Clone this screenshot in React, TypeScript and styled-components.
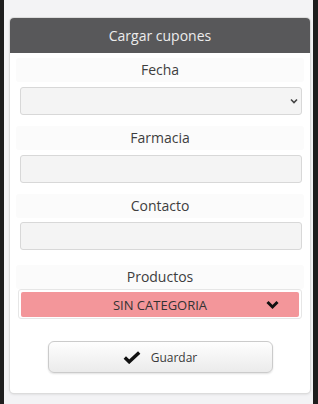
import React from 'react';
import styled, { createGlobalStyle } from 'styled-components';

const GlobalStyle = createGlobalStyle`
  html, body {
    margin: 0;
    padding: 0;
    background: #1e1e1e;
  }
  body {
    font-family: 'Open Sans', 'Liberation Sans', sans-serif;
  }
  * {
    box-sizing: border-box;
  }
`;

const Screen = styled.div`
  width: 318px;
  height: 404px;
  padding: 0 5px 0 4px;
  background: #1e1e1e;
  overflow: hidden;
`;

const Page = styled.div`
  height: 100%;
  background: #f3f3f5;
  padding: 18px 3px 0 6px;
`;

const Card = styled.div`
  width: 300px;
  background: #fff;
  border-radius: 4px;
  box-shadow: 0 0 0 1px #dcdcdc, 0 1px 3px rgba(0, 0, 0, 0.15);
`;

const Header = styled.div`
  height: 35px;
  background: #58585a;
  border-radius: 4px 4px 0 0;
  color: #ececec;
  font-size: 14px;
  display: flex;
  align-items: center;
  justify-content: center;
`;

const Body = styled.div`
  padding: 5px 6px 20px;
  display: flex;
  flex-direction: column;
`;

const Field = styled.div<{ $top?: number }>`
  margin-top: ${(p) => p.$top ?? 0}px;
  display: flex;
  flex-direction: column;
`;

const Label = styled.div<{ $gap?: number }>`
  height: 24px;
  line-height: 24px;
  background: #fbfbfb;
  border-radius: 3px;
  text-align: center;
  font-size: 14px;
  color: #3e3e3e;
  margin-bottom: ${(p) => p.$gap ?? 5}px;
`;

const Control = styled.div`
  position: relative;
  margin: 0 2px 0 4px;
`;

const Input = styled.input`
  display: block;
  width: 100%;
  height: 28px;
  background: #f4f4f4;
  border: 1px solid #d8d8d8;
  border-radius: 3px;
  font-family: inherit;
  font-size: 13px;
  outline: none;
`;

const Select = styled.select`
  display: block;
  width: 100%;
  height: 28px;
  background: #f4f4f4;
  border: 1px solid #d8d8d8;
  border-radius: 3px;
  appearance: none;
  font-family: inherit;
  font-size: 13px;
  outline: none;
`;

const Arrow = styled.svg<{ $right: number }>`
  position: absolute;
  right: ${(p) => p.$right}px;
  top: 50%;
  transform: translateY(-50%);
  pointer-events: none;
`;

const PinkFrame = styled.div`
  margin: 0 2px 0 2px;
  padding: 2px 2px 1px;
  border: 1px solid #e6e6e6;
  border-radius: 3px;
`;

const PinkSelect = styled.div`
  position: relative;
  height: 25px;
  background: #f3969a;
  border-radius: 2px;
  display: flex;
  align-items: center;
  justify-content: center;
  font-size: 13px;
  color: #333;
`;

const Actions = styled.div`
  display: flex;
  justify-content: center;
  margin-top: 22px;
`;

const Button = styled.button`
  width: 225px;
  height: 32px;
  display: flex;
  align-items: center;
  justify-content: center;
  gap: 10px;
  border: 1px solid #cbcbcb;
  border-radius: 6px;
  background: linear-gradient(#fefefe, #ebebeb);
  box-shadow: 0 1px 2px rgba(0, 0, 0, 0.12);
  font-family: inherit;
  font-size: 12px;
  color: #3a3a3a;
  padding: 0;
`;

function SmallChevron() {
  return (
    <Arrow $right={4} width="8" height="6" viewBox="0 0 8 6">
      <polyline points="1,1.5 4,4.5 7,1.5" fill="none" stroke="#444" strokeWidth="1.6" />
    </Arrow>
  );
}

function BoldChevron() {
  return (
    <Arrow $right={20} width="13" height="9" viewBox="0 0 13 9">
      <polyline points="1.5,1.5 6.5,6.5 11.5,1.5" fill="none" stroke="#111" strokeWidth="3" />
    </Arrow>
  );
}

function CheckIcon() {
  return (
    <svg width="18" height="13" viewBox="0 0 18 13">
      <polyline points="1.8,6.5 6.2,10.8 16.2,1.6" fill="none" stroke="#111" strokeWidth="3.4" />
    </svg>
  );
}

export default function App() {
  return (
    <Screen>
      <GlobalStyle />
      <Page>
        <Card>
          <Header>Cargar cupones</Header>
          <Body>
            <Field>
              <Label>Fecha</Label>
              <Control>
                <Select defaultValue="">
                  <option value=""></option>
                </Select>
                <SmallChevron />
              </Control>
            </Field>
            <Field $top={11}>
              <Label>Farmacia</Label>
              <Control>
                <Input />
              </Control>
            </Field>
            <Field $top={11}>
              <Label $gap={4}>Contacto</Label>
              <Control>
                <Input />
              </Control>
            </Field>
            <Field $top={15}>
              <Label $gap={0}>Productos</Label>
              <PinkFrame>
                <PinkSelect>
                  SIN CATEGORIA
                  <BoldChevron />
                </PinkSelect>
              </PinkFrame>
            </Field>
            <Actions>
              <Button>
                <CheckIcon />
                Guardar
              </Button>
            </Actions>
          </Body>
        </Card>
      </Page>
    </Screen>
  );
}
